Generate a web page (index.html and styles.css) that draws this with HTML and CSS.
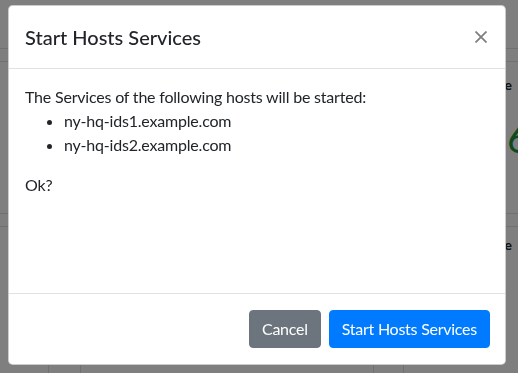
FILE: index.html
```html
<!DOCTYPE html>
<html lang="en">
<head>
  <meta charset="UTF-8">
  <meta name="viewport" content="width=device-width, initial-scale=1.0">
  <title>Hosts</title>
  <link rel="stylesheet" href="styles.css">
</head>
<body>

  <!-- Page behind the dialog -->
  <div class="page">
    <div class="topnav"></div>
    <div class="subhead"></div>
    <div class="stats">
      <div class="stats-fill"></div>
      <div class="stat">
        <div class="stat-label">Online</div>
        <div class="stat-value">6</div>
      </div>
    </div>
    <div class="subhead"></div>
    <div class="hosts">
      <div class="cell c1"></div>
      <div class="cell c2"></div>
      <div class="cell c3"></div>
      <div class="cell c4"></div>
      <div class="cell c5"><span class="stat-label">Service</span></div>
    </div>
  </div>

  <!-- Modal -->
  <div class="backdrop"></div>
  <div class="modal">
    <div class="modal-dialog">
      <div class="modal-content">
        <div class="modal-header">
          <h5 class="modal-title">Start Hosts Services</h5>
          <button type="button" class="close" aria-label="Close">
            <svg width="12" height="12" viewBox="0 0 12 12">
              <path d="M0.5 0.5 L11.5 11.5 M11.5 0.5 L0.5 11.5" stroke="currentColor" stroke-width="1.8" fill="none"/>
            </svg>
          </button>
        </div>
        <div class="modal-body">
          <p>The Services of the following hosts will be started:</p>
          <ul>
            <li>ny-hq-ids1.example.com</li>
            <li>ny-hq-ids2.example.com</li>
          </ul>
          <p>Ok?</p>
        </div>
        <div class="modal-footer">
          <button type="button" class="btn btn-secondary">Cancel</button>
          <button type="button" class="btn btn-primary">Start Hosts Services</button>
        </div>
      </div>
    </div>
  </div>

</body>
</html>
```

FILE: styles.css
```css
/* General */
* {
  box-sizing: border-box;
}

body {
  margin: 0;
  font-family: Lato, "Liberation Sans", sans-serif;
  font-size: 16px;
  line-height: 1.5;
  color: #212529;
  background: #fff;
}

/* Page behind */
.page {
  height: 373px;
  overflow: hidden;
}

.topnav {
  height: 49px;
  border-bottom: 1px solid #dee2e6;
}

.subhead {
  height: 13px;
  border-bottom: 1px solid #dee2e6;
}

.stats {
  display: flex;
  height: 152px;
  border-bottom: 1px solid #dee2e6;
}

.stats-fill {
  width: 400px;
  flex-shrink: 0;
}

.stat {
  flex: 1;
  min-width: 0;
  padding-top: 12px;
}

.stat-label {
  font-size: 14px;
  font-weight: 700;
  text-align: right;
  padding-right: 6px;
}

.stat-value {
  font-size: 40px;
  line-height: 1.2;
  color: #1e9438;
  padding-left: 107px;
  margin-top: 19px;
  white-space: nowrap;
}

.hosts {
  display: flex;
  height: 200px;
}

.cell {
  flex-shrink: 0;
  border-left: 1px solid #dee2e6;
}

.c1 {
  width: 48px;
  border-left: 0;
}

.c2 {
  width: 32px;
}

.c3 {
  width: 293px;
}

.c4 {
  width: 30px;
}

.c5 {
  flex: 1;
  flex-shrink: 1;
  min-width: 0;
  padding-top: 7px;
  text-align: right;
}

.c5 .stat-label {
  display: block;
}

/* Modal */
.backdrop {
  position: fixed;
  top: 0;
  left: 0;
  right: 0;
  bottom: 0;
  background: rgba(0, 0, 0, 0.5);
}

.modal {
  position: fixed;
  top: 0;
  left: 0;
  right: 0;
  bottom: 0;
}

.modal-dialog {
  width: 498px;
  margin: 5px 0 0 8px;
}

.modal-content {
  background: #fff;
  border: 1px solid rgba(0, 0, 0, 0.2);
  border-radius: 4.8px;
}

.modal-header {
  display: flex;
  align-items: center;
  justify-content: space-between;
  padding: 16px;
  border-bottom: 1px solid #dee2e6;
}

.modal-title {
  margin: 0;
  font-size: 20px;
  font-weight: 500;
  line-height: 1.5;
}

.close {
  padding: 0;
  margin: 0 2px 0 auto;
  background: transparent;
  border: 0;
  color: #000;
  opacity: 0.5;
  cursor: pointer;
}

.close svg {
  display: block;
}

.modal-body {
  min-height: 224px;
  padding: 16px;
  letter-spacing: -0.2px;
}

.modal-body p {
  margin: 0;
}

.modal-body ul {
  margin: 0 0 16px;
  padding-left: 39px;
}

.modal-footer {
  display: flex;
  justify-content: flex-end;
  align-items: center;
  padding: 12px 11px 12px 12px;
  border-top: 1px solid #dee2e6;
}

/* Buttons */
.btn {
  margin: 4px;
  padding: 6px 12px;
  font-family: inherit;
  font-size: 16px;
  line-height: 1.5;
  letter-spacing: -0.25px;
  border: 1px solid transparent;
  border-radius: 4px;
  color: #fff;
  cursor: pointer;
}

.btn-secondary {
  background-color: #6c757d;
  border-color: #6c757d;
}

.btn-primary {
  background-color: #007bff;
  border-color: #007bff;
}
```
